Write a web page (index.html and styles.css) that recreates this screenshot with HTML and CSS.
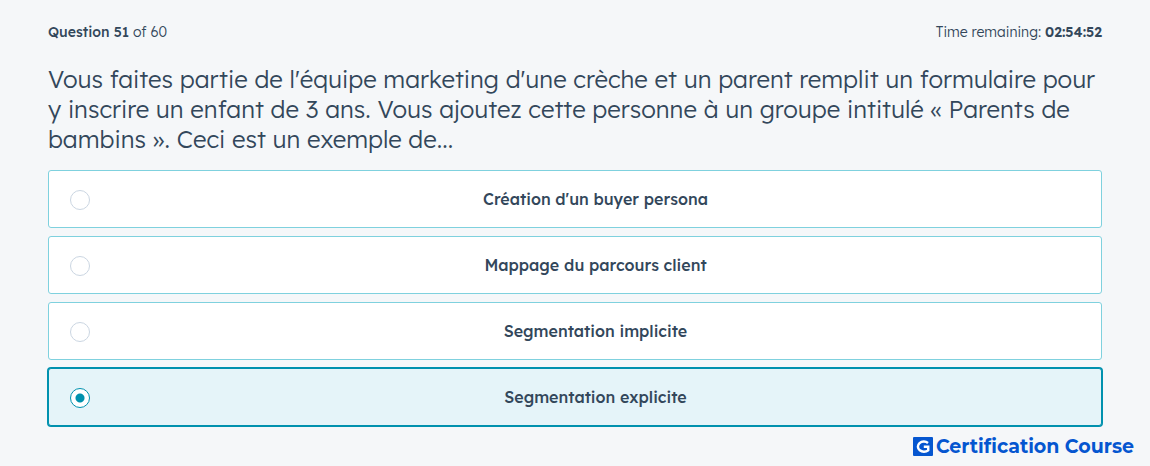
FILE: index.html
```html
<!DOCTYPE html>
<html lang="fr">
<head>
<meta charset="utf-8">
<meta name="viewport" content="width=device-width, initial-scale=1">
<title>Question 51</title>
<link rel="stylesheet" href="styles.css">
</head>
<body>
<main class="exam">
  <header class="exam-status">
    <span><strong>Question 51</strong> of 60</span>
    <span>Time remaining: <strong class="timer">02:54:52</strong></span>
  </header>
  <form>
    <fieldset class="question">
      <legend class="question-text">Vous faites partie de l'équipe marketing d'une crèche et un parent remplit un formulaire pour y inscrire un enfant de 3 ans. Vous ajoutez cette personne à un groupe intitulé « Parents de bambins ». Ceci est un exemple de...</legend>
      <div class="options">
        <label class="option"><input class="option-radio" type="radio" name="answer" value="1"><span class="option-text">Création d'un buyer persona</span></label>
        <label class="option"><input class="option-radio" type="radio" name="answer" value="2"><span class="option-text">Mappage du parcours client</span></label>
        <label class="option"><input class="option-radio" type="radio" name="answer" value="3"><span class="option-text">Segmentation implicite</span></label>
        <label class="option"><input class="option-radio" type="radio" name="answer" value="4" checked><span class="option-text">Segmentation explicite</span></label>
      </div>
    </fieldset>
  </form>
</main>
<footer class="brand">
  <svg class="brand-mark" viewBox="0 0 20 20" aria-hidden="true">
    <rect width="20" height="19" rx="1" fill="#0556d0"/>
    <path d="M15 5.9A6 5.1 0 1 0 15.2 13.2V9.8H10.8" fill="none" stroke="#fff" stroke-width="2.5"/>
  </svg>
  <span>Certification Course</span>
</footer>
</body>
</html>
```

FILE: styles.css
```css
* {
  box-sizing: border-box;
}

body {
  margin: 0;
  background: #f5f7f9;
  color: #33475b;
  font-family: "Lexend Deca", Lexend, Inter, sans-serif;
}

.exam {
  padding: 22px 48px 0;
}

.exam-status {
  display: flex;
  justify-content: space-between;
  font-size: 14px;
  font-weight: 300;
  line-height: 20px;
}

.exam-status strong {
  font-weight: 500;
}

.exam-status .timer {
  font-weight: 600;
}

.question {
  min-width: 0;
  margin: 22px 0 0;
  padding: 0;
  border: 0;
}

.question-text {
  padding: 0;
  font-size: 24px;
  font-weight: 300;
  line-height: 30px;
}

.options {
  display: grid;
  gap: 8px;
  padding-top: 16px;
}

.option {
  display: flex;
  align-items: center;
  min-height: 58px;
  padding-left: 21px;
  border: 1px solid #7fd1de;
  border-radius: 3px;
  background: #fff;
}

.option:has(:checked) {
  border-color: #0091ae;
  background: #e5f4f9;
  box-shadow: 0 0 0 1px #0091ae;
}

.option-radio {
  appearance: none;
  flex: none;
  width: 20px;
  height: 20px;
  margin: 2px 0 0;
  border: 1px solid #cbd6e2;
  border-radius: 50%;
  background: #fff;
}

.option-radio:checked {
  border-color: #0091ae;
  background: radial-gradient(circle, #0091ae 4px, #fff 5px);
}

.option-text {
  flex: 1;
  font-size: 16px;
  font-weight: 500;
  line-height: 24px;
  text-align: center;
}

.brand {
  display: flex;
  align-items: center;
  justify-content: flex-end;
  gap: 3px;
  padding: 11px 16px 0;
  color: #0556d0;
  font-family: Montserrat, Inter, sans-serif;
  font-size: 19px;
  font-weight: 700;
  line-height: 20px;
}

.brand-mark {
  width: 20px;
  height: 20px;
}
```
